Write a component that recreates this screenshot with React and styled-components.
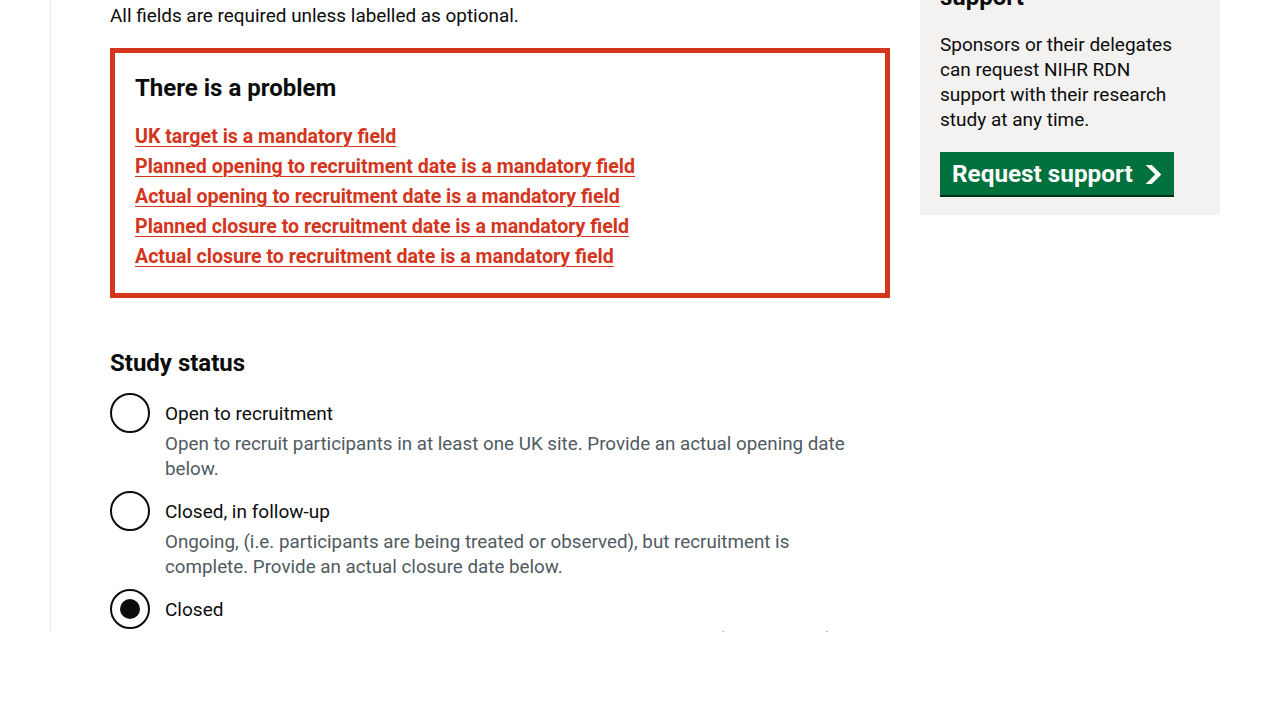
import React from "react";
import styled, { createGlobalStyle } from "styled-components";

const errors = [
  "UK target is a mandatory field",
  "Planned opening to recruitment date is a mandatory field",
  "Actual opening to recruitment date is a mandatory field",
  "Planned closure to recruitment date is a mandatory field",
  "Actual closure to recruitment date is a mandatory field",
];

const statuses = [
  {
    id: "open",
    label: "Open to recruitment",
    hint: "Open to recruit participants in at least one UK site. Provide an actual opening date below.",
  },
  {
    id: "follow-up",
    label: "Closed, in follow-up",
    hint: "Ongoing, (i.e. participants are being treated or observed), but recruitment is complete. Provide an actual closure date below.",
  },
  {
    id: "closed",
    label: "Closed",
    hint: "No longer recruiting and all participants have completed follow-up (if applicable). Provide an actual closure date below.",
    checked: true,
  },
];

function App() {
  return (
    <>
      <GlobalStyle />
      <Viewport>
        <Page>
          <MainColumn>
            <Body>All fields are required unless labelled as optional.</Body>

            <ErrorSummary role="alert">
              <ErrorTitle>There is a problem</ErrorTitle>
              <ErrorList>
                {errors.map((e) => (
                  <li key={e}>
                    <ErrorLink href="#">{e}</ErrorLink>
                  </li>
                ))}
              </ErrorList>
            </ErrorSummary>

            <Fieldset>
              <Legend>Study status</Legend>
              {statuses.map((s) => (
                <RadioItem key={s.id}>
                  <RadioInput
                    type="radio"
                    name="status"
                    id={s.id}
                    defaultChecked={s.checked}
                  />
                  <RadioLabel htmlFor={s.id}>{s.label}</RadioLabel>
                  <Hint>{s.hint}</Hint>
                </RadioItem>
              ))}
            </Fieldset>
          </MainColumn>

          <Sidebar>
            <SideTitle>Request NIHR RDN support</SideTitle>
            <SideText>
              Sponsors or their delegates can request NIHR RDN support with
              their research study at any time.
            </SideText>
            <StartButton href="#">
              Request support
              <svg width="17" height="19" viewBox="0 0 33 40" aria-hidden="true">
                <path fill="currentColor" d="M0 0h13l20 20-20 20H0l20-20z" />
              </svg>
            </StartButton>
          </Sidebar>
        </Page>
      </Viewport>
    </>
  );
}

export default App;

const GlobalStyle = createGlobalStyle`
  html, body {
    margin: 0;
    background: #fff;
  }
  body {
    font-family: Roboto, "Liberation Sans", Arial, sans-serif;
    color: #0b0c0c;
  }
  * { box-sizing: border-box; }
`;

// the page is scrolled: only this window of it is seen
const Viewport = styled.div`
  height: 632px;
  overflow: hidden;
`;

const Page = styled.div`
  margin-left: 50px;
  margin-top: -68px;
  min-height: 720px;
  padding: 0 60px;
  display: flex;
  align-items: flex-start;
  gap: 30px;
  box-shadow: inset 1px 0 0 #ededed, inset 3px 0 3px -2px rgba(0, 0, 0, 0.05);
`;

const MainColumn = styled.main`
  width: 780px;
  flex: none;
  padding-top: 71px;
`;

const Body = styled.p`
  margin: 0 0 20px;
  font-size: 18.9px;
  line-height: 25px;
`;

const ErrorSummary = styled.div`
  border: 5px solid #d4351c;
  padding: 20px;
  margin-bottom: 50px;
`;

const ErrorTitle = styled.h2`
  margin: 0 0 20px;
  font-size: 24px;
  line-height: 30px;
  font-weight: 700;
`;

const ErrorList = styled.ul`
  list-style: none;
  margin: 0;
  padding: 0;

  li {
    padding-top: 1px;
    margin-bottom: 4px;
    font-size: 19.6px;
    line-height: 25px;
  }
`;

const ErrorLink = styled.a`
  color: #d4351c;
  font-weight: 700;
  text-decoration: underline;
  text-decoration-thickness: 1px;
  text-underline-offset: 0.16em;
`;

const Fieldset = styled.fieldset`
  border: 0;
  margin: 0;
  padding: 0;
`;

const Legend = styled.legend`
  padding: 0;
  margin: 0 0 15px;
  font-size: 24px;
  line-height: 30px;
  font-weight: 700;
`;

const RadioItem = styled.div`
  position: relative;
  min-height: 40px;
  padding-left: 40px;
  margin-bottom: 9px;
`;

const RadioInput = styled.input`
  position: absolute;
  left: 0;
  top: 0;
  width: 40px;
  height: 40px;
  margin: 0;
  appearance: none;
  border: 2px solid #0b0c0c;
  border-radius: 50%;
  background: #fff;
  cursor: pointer;

  &:checked::before {
    content: "";
    position: absolute;
    left: 8px;
    top: 8px;
    width: 20px;
    height: 20px;
    border-radius: 50%;
    background: #0b0c0c;
  }
`;

const RadioLabel = styled.label`
  display: inline-block;
  padding: 8px 15px 5px;
  font-size: 19px;
  line-height: 25px;
  cursor: pointer;
`;

const Hint = styled.div`
  padding: 1px 15px 0;
  font-size: 18.8px;
  line-height: 25px;
  color: #505a5f;
`;

const Sidebar = styled.aside`
  width: 300px;
  flex: none;
  background: #f3f2f1;
  padding: 20px;
`;

const SideTitle = styled.h2`
  margin: 0 0 20px;
  font-size: 24px;
  line-height: 30px;
  font-weight: 700;
`;

const SideText = styled.p`
  margin: 0 0 20px;
  font-size: 19px;
  line-height: 25px;
`;

const StartButton = styled.a`
  display: inline-flex;
  align-items: center;
  gap: 12px;
  padding: 7px 12px 6px;
  background: #00703c;
  color: #fff;
  font-size: 24.3px;
  line-height: 30px;
  font-weight: 700;
  text-decoration: none;
  box-shadow: 0 2px 0 #002d18;
`;
